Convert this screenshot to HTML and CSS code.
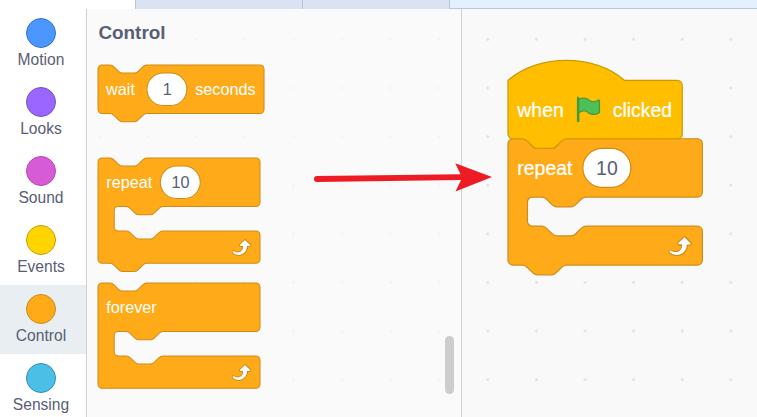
FILE: index.html
```
<!DOCTYPE html>
<html lang="en">
<head>
<meta charset="utf-8">
<title>Block editor</title>
<link rel="stylesheet" href="styles.css">
</head>
<body>
<svg class="defs" aria-hidden="true">
  <defs>
    <path id="c-block" d="M0,4A4,4 0 0,1 4,0H12c2,0 3,1 4,2l4,4c1,1 2,2 4,2h12c2,0 3,-1 4,-2l4,-4c1,-1 2,-2 4,-2H156a4,4 0 0,1 4,4v40a4,4 0 0,1 -4,4H64c-2,0 -3,1 -4,2l-4,4c-1,1 -2,2 -4,2h-12c-2,0 -3,-1 -4,-2l-4,-4c-1,-1 -2,-2 -4,-2h-8a4,4 0 0,0 -4,4v16a4,4 0 0,0 4,4h8c2,0 3,1 4,2l4,4c1,1 2,2 4,2h12c2,0 3,-1 4,-2l4,-4c1,-1 2,-2 4,-2H156a4,4 0 0,1 4,4v24a4,4 0 0,1 -4,4H48c-2,0 -3,1 -4,2l-4,4c-1,1 -2,2 -4,2h-12c-2,0 -3,-1 -4,-2l-4,-4c-1,-1 -2,-2 -4,-2H4a4,4 0 0,1 -4,-4z"/>
    <g id="loop-arrow">
      <path fill="#cf8b17" d="M23.3,11c-0.3,0.6-0.9,1-1.5,1h-1.6c-0.1,1.3-0.5,2.5-1.1,3.6c-0.9,1.7-2.3,3.2-4.1,4.1c-1.7,0.9-3.6,1.2-5.5,0.9c-1.8-0.3-3.5-1.1-4.9-2.3c-0.7-0.7-0.7-1.9,0-2.6c0.6-0.6,1.6-0.7,2.3-0.2H7c0.9,0.6,1.9,0.9,2.9,0.9s1.9-0.3,2.7-0.9c1.1-0.8,1.8-2.1,1.8-3.5h-1.5c-0.9,0-1.7-0.7-1.7-1.7c0-0.4,0.2-0.9,0.5-1.2l4.4-4.4c0.7-0.6,1.7-0.6,2.4,0L23,9.2C23.5,9.7,23.6,10.4,23.3,11z"/>
      <path fill="#fff" d="M21.8,11h-2.6c0,1.5-0.3,2.9-1,4.2c-0.8,1.6-2.1,2.8-3.7,3.6c-1.5,0.8-3.3,1.1-4.9,0.8c-1.6-0.2-3.2-1-4.4-2.1c-0.4-0.3-0.4-0.9-0.1-1.2c0.3-0.4,0.9-0.4,1.2-0.1c1,0.7,2.2,1.1,3.4,1.1s2.3-0.3,3.3-1c0.9-0.6,1.6-1.5,2-2.6c0.3-0.9,0.4-1.8,0.2-2.8h-2.4c-0.4,0-0.7-0.3-0.7-0.7c0-0.2,0.1-0.3,0.2-0.4l4.4-4.4c0.3-0.3,0.7-0.3,0.9,0L22,9.8c0.3,0.3,0.4,0.6,0.3,0.9S22,11,21.8,11z"/>
    </g>
  </defs>
</svg>
<div class="editor">
  <header class="tabs">
    <div class="tab tab-active"></div>
    <div class="tab tab-costumes"></div>
    <div class="tab tab-sounds"></div>
    <div class="tab-rest"></div>
  </header>
  <main class="main">
    <nav class="categories">
      <div class="category"><span class="dot motion"></span>Motion</div>
      <div class="category"><span class="dot looks"></span>Looks</div>
      <div class="category"><span class="dot sound"></span>Sound</div>
      <div class="category"><span class="dot events"></span>Events</div>
      <div class="category selected"><span class="dot control"></span>Control</div>
      <div class="category"><span class="dot sensing"></span>Sensing</div>
    </nav>
    <svg class="grid" width="671" height="408">
      <defs>
        <pattern id="dots" x="377.5" y="6.1" width="48.6" height="48.6" patternUnits="userSpaceOnUse">
          <rect x="23" y="23" width="2.6" height="2.6" rx="1" fill="#ddd"/>
        </pattern>
      </defs>
      <rect width="671" height="408" fill="url(#dots)"/>
    </svg>
    <section class="flyout">
      <div class="palette">
        <h2 class="heading">Control</h2>
        <svg class="block wait" width="166.05" height="56.7" viewBox="0 0 164 56">
          <path class="control-shape" d="M0,4A4,4 0 0,1 4,0H12c2,0 3,1 4,2l4,4c1,1 2,2 4,2h12c2,0 3,-1 4,-2l4,-4c1,-1 2,-2 4,-2H160a4,4 0 0,1 4,4v40a4,4 0 0,1 -4,4H48c-2,0 -3,1 -4,2l-4,4c-1,1 -2,2 -4,2h-12c-2,0 -3,-1 -4,-2l-4,-4c-1,-1 -2,-2 -4,-2H4a4,4 0 0,1 -4,-4z"/>
          <text x="8" y="30">wait</text>
          <rect class="input" x="48.3" y="8" width="39.5" height="32" rx="16"/>
          <text class="value" x="68.4" y="30">1</text>
          <text x="96" y="30">seconds</text>
        </svg>
        <svg class="block repeat" width="162" height="113.4" viewBox="0 0 160 112">
          <use class="control-shape" href="#c-block"/>
          <text x="8.2" y="30">repeat</text>
          <rect class="input" x="61.5" y="8" width="39.5" height="32" rx="16"/>
          <text class="value" x="81.5" y="30">10</text>
          <use href="#loop-arrow" x="128" y="76"/>
        </svg>
        <svg class="block forever" width="162" height="105.3" viewBox="0 0 160 104">
          <path class="control-shape" d="M0,4A4,4 0 0,1 4,0H12c2,0 3,1 4,2l4,4c1,1 2,2 4,2h12c2,0 3,-1 4,-2l4,-4c1,-1 2,-2 4,-2H156a4,4 0 0,1 4,4v40a4,4 0 0,1 -4,4H64c-2,0 -3,1 -4,2l-4,4c-1,1 -2,2 -4,2h-12c-2,0 -3,-1 -4,-2l-4,-4c-1,-1 -2,-2 -4,-2h-8a4,4 0 0,0 -4,4v16a4,4 0 0,0 4,4h8c2,0 3,1 4,2l4,4c1,1 2,2 4,2h12c2,0 3,-1 4,-2l4,-4c1,-1 2,-2 4,-2H156a4,4 0 0,1 4,4v24a4,4 0 0,1 -4,4H4a4,4 0 0,1 -4,-4z"/>
          <text x="8.2" y="30">forever</text>
          <use href="#loop-arrow" x="128" y="76"/>
        </svg>
      </div>
      <div class="scrollbar"></div>
    </section>
    <section class="workspace">
      <svg class="block script" width="194.4" height="194.4" viewBox="0 -0.35 160 160">
        <g transform="translate(0 48)">
          <use class="control-shape" href="#c-block"/>
          <text x="7.7" y="29.9">repeat</text>
          <rect class="input" x="61.6" y="8" width="39.5" height="32" rx="16"/>
          <text class="value" x="81.4" y="29.9">10</text>
          <use href="#loop-arrow" x="128" y="76"/>
        </g>
        <path class="event-shape" d="M0,0c25,-22 71,-22 96,0H139.4a4,4 0 0,1 4,4v40a4,4 0 0,1 -4,4H48c-2,0 -3,1 -4,2l-4,4c-1,1 -2,2 -4,2h-12c-2,0 -3,-1 -4,-2l-4,-4c-1,-1 -2,-2 -4,-2H4a4,4 0 0,1 -4,-4z"/>
        <text x="7.7" y="30.2">when</text>
        <g transform="translate(54.2 12)">
          <path fill="#45993d" d="M20.8,3.7c-0.4-0.2-0.9-0.1-1.2,0.2c-2,1.6-4.8,1.6-6.8,0c-2.3-1.9-5.6-2.3-8.3-1V2.5c0-0.6-0.5-1-1-1s-1,0.4-1,1v18.8c0,0.5,0.5,1,1,1h0.1c0.5,0,1-0.4,1-1v-6.4c1-0.7,2.1-1.2,3.4-1.3c1.2,0,2.4,0.4,3.4,1.2c2.9,2.3,7,2.3,9.8,0c0.3-0.2,0.4-0.5,0.4-0.9V4.7C21.6,4.2,21.3,3.8,20.8,3.7z"/>
          <path fill="#4cbf56" d="M20.5,13.9C18,16 14.4,16 11.9,14c-1.1-0.9-2.5-1.4-4-1.4c-1.2,0.1-2.3,0.5-3.4,1.1V4c2.5-1.4,5.5-1.1,7.7,0.6c2.4,1.9,5.7,1.9,8.1,0h0.2V13.9z"/>
        </g>
        <text x="86.2" y="30.2">clicked</text>
      </svg>
    </section>
  </main>
  <svg class="pointer" width="180" height="30" viewBox="313 163 180 30">
    <path fill="#ed1c24" d="M317,176L460.5,174.2L455.2,163.3L492,177L455.5,191.5L461,180L317,182A3,3 0 0,1 317,176z"/>
  </svg>
</div>
</body>
</html>
```
FILE: styles.css
```
* { box-sizing: border-box; }

body {
  margin: 0;
  overflow: hidden;
  background: #f9f9f9;
  color: #575e75;
  font-family: "Liberation Sans", Arial, sans-serif;
}

.defs { position: absolute; width: 0; height: 0; }

.editor {
  position: relative;
  display: flex;
  flex-direction: column;
  width: 757px;
  height: 417px;
  overflow: hidden;
}

.tabs { display: flex; flex: 0 0 9px; background: #fff; }
.tab-active { width: 135px; }
.tab-costumes, .tab-sounds { background: #d9e3f2; border-left: 1px solid #b9c5d8; }
.tab-costumes { width: 167px; }
.tab-sounds { width: 147px; }
.tab-rest {
  flex: 1;
  background: #e5f0ff;
  border-left: 1px solid #b9c5d8;
  border-bottom: 1px solid #b9c8dd;
}

.main { position: relative; display: flex; flex: 1; min-height: 0; }

.categories { flex: 0 0 86px; overflow: hidden; background: #fff; }
.category {
  display: flex;
  flex-direction: column;
  align-items: center;
  gap: 3px;
  height: 69px;
  padding: 9px 4px 0 0;
  font-size: 15.6px;
  line-height: 18px;
}
.selected { background: #e9eef2; }

.dot { flex: none; width: 30px; height: 30px; border: 1px solid; border-radius: 50%; }
.motion { background: #4c97ff; border-color: #3373cc; }
.looks { background: #9966ff; border-color: #774dcb; }
.sound { background: #d65cd6; border-color: #bd42bd; }
.events { background: #ffd500; border-color: #cc9900; }
.control { background: #ffab19; border-color: #cf8b17; }
.sensing { background: #4cbfe6; border-color: #2e8eb8; }

/* Dot grid shared by the palette and the workspace */
.grid { position: absolute; left: 86px; top: 0; }

.flyout {
  position: relative;
  display: flex;
  justify-content: space-between;
  width: 376px;
  padding: 0 7px 0 11px;
  background: rgba(249, 249, 249, 0.75);
  border-left: 1px solid #d0d0d0;
  border-right: 1px solid #d0d0d0;
}
.palette { display: flex; flex-direction: column; align-items: flex-start; }
.heading {
  margin: 13px 0 0 0.4px;
  font-size: 18.9px;
  line-height: 22px;
  font-weight: bold;
}
.scrollbar {
  align-self: flex-end;
  width: 9px;
  height: 58px;
  margin-bottom: 23px;
  border-radius: 5px;
  background: #cecdce;
}

.block { display: block; flex: none; overflow: visible; }
.wait { margin-top: 20.6px; }
.repeat { margin-top: 36.3px; }
.forever { margin-top: 12.4px; }

.workspace { position: relative; flex: 1; padding: 71px 0 0 45.8px; }

.block text { fill: #fff; font-size: 16px; }
.script text:not(.value) { stroke: #fff; stroke-width: 0.2px; }
.block .value { fill: #575e75; text-anchor: middle; }
.control-shape { fill: #ffab19; stroke: #cf8b17; }
.event-shape { fill: #ffbf00; stroke: #cc9900; }
.input { fill: #fff; stroke: #cf8b17; }

.pointer { position: absolute; left: 313px; top: 163px; }
```
